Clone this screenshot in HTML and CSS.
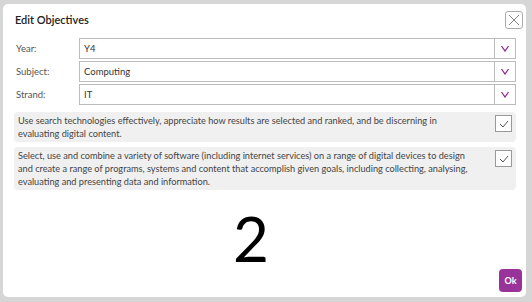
FILE: index.html
```html
<!DOCTYPE html>
<html lang="en">
<head>
    <meta charset="UTF-8">
    <meta name="viewport" content="width=device-width, initial-scale=1.0">
    <title>Edit Objectives</title>
    <link rel="stylesheet" href="styles.css">
</head>
<body>

    <div class="modal">
        <div class="modal-head">
            <h1>Edit Objectives</h1>
            <button class="close" aria-label="Close">
                <svg width="12" height="12" viewBox="0 0 12 12"><path d="M1 1 L11 11 M11 1 L1 11" stroke="#888" stroke-width="1" fill="none"/></svg>
            </button>
        </div>

        <div class="fields">
            <div class="field">
                <label>Year:</label>
                <div class="select">
                    <span class="value">Y4</span>
                    <span class="arrow"><svg width="10" height="7" viewBox="0 0 10 7"><path d="M1.5 1 L5 6 L8.5 1" stroke="#92278f" stroke-width="1.3" fill="none"/></svg></span>
                </div>
            </div>
            <div class="field">
                <label>Subject:</label>
                <div class="select">
                    <span class="value">Computing</span>
                    <span class="arrow"><svg width="10" height="7" viewBox="0 0 10 7"><path d="M1.5 1 L5 6 L8.5 1" stroke="#92278f" stroke-width="1.3" fill="none"/></svg></span>
                </div>
            </div>
            <div class="field">
                <label>Strand:</label>
                <div class="select">
                    <span class="value">IT</span>
                    <span class="arrow"><svg width="10" height="7" viewBox="0 0 10 7"><path d="M1.5 1 L5 6 L8.5 1" stroke="#92278f" stroke-width="1.3" fill="none"/></svg></span>
                </div>
            </div>
        </div>

        <div class="objectives">
            <div class="objective">
                <p>Use search technologies effectively, appreciate how results are selected and ranked, and be discerning in evaluating digital content.</p>
                <span class="check"><svg width="10" height="8" viewBox="0 0 10 8"><path d="M1 4 L4 7 L9 1" stroke="#555" stroke-width="1" fill="none"/></svg></span>
            </div>
            <div class="objective">
                <p>Select, use and combine a variety of software (including internet services) on a range of digital devices to design and create a range of programs, systems and content that accomplish given goals, including collecting, analysing, evaluating and presenting data and information.</p>
                <span class="check"><svg width="10" height="8" viewBox="0 0 10 8"><path d="M1 4 L4 7 L9 1" stroke="#555" stroke-width="1" fill="none"/></svg></span>
            </div>
        </div>

        <div class="count">2</div>

        <div class="modal-foot">
            <button class="btn">Ok</button>
        </div>
    </div>

</body>
</html>
```

FILE: styles.css
```css
* {
    margin: 0;
    padding: 0;
    box-sizing: border-box;
}

/* Sfondo grigio dietro la finestra */
body {
    background-color: #d6d6d6;
    font-family: "Lato", "Open Sans", sans-serif;
    color: #333;
    padding: 4px 6px 5px 3px;
    height: 302px;
    overflow: hidden;
}

.modal {
    background: white;
    border-radius: 5px;
    height: 293px;
    padding: 0 10px 5px 11px;
    display: flex;
    flex-direction: column;
}

.modal-head {
    display: flex;
    justify-content: space-between;
    align-items: center;
    height: 30px;
    padding-left: 1px;
}

h1 {
    font-size: 11px;
    font-weight: 600;
    color: #222;
    padding-top: 1px;
}

.close {
    width: 18px;
    height: 18px;
    border: 1px solid #aaa;
    border-radius: 3px;
    background: white;
    display: flex;
    align-items: center;
    justify-content: center;
    margin-right: -7px;
    margin-top: 2px;
}

.fields {
    display: flex;
    flex-direction: column;
    gap: 2px;
    margin-top: 4px;
    padding-left: 2px;
}

.field {
    display: flex;
    align-items: center;
}

.field label {
    width: 63px;
    font-size: 9.5px;
    color: #555;
}

.select {
    flex: 1;
    height: 21px;
    border: 1px solid #bbb;
    display: flex;
    align-items: center;
    font-size: 9.5px;
    color: #333;
}

.select .value {
    flex: 1;
    padding-left: 4px;
}

.select .arrow {
    width: 21px;
    height: 100%;
    border-left: 1px solid #bbb;
    display: flex;
    align-items: center;
    justify-content: center;
}

.objectives {
    display: flex;
    flex-direction: column;
    gap: 5px;
    margin-top: 7px;
}

.objective {
    background: #f0f0f0;
    border-radius: 4px;
    display: flex;
    align-items: flex-start;
    padding: 2px 4px 2px 4px;
}

.objective p {
    flex: 1;
    font-size: 9.2px;
    line-height: 13px;
    color: #444;
    padding-right: 20px;
}

.check {
    width: 17px;
    height: 17px;
    border: 1px solid #999;
    background: white;
    display: flex;
    align-items: center;
    justify-content: center;
    margin-top: 1px;
}

.count {
    font-size: 62px;
    color: black;
    text-align: center;
    margin-top: 17px;
    margin-right: 28px;
    line-height: 1;
}

.modal-foot {
    margin-top: auto;
    display: flex;
    justify-content: flex-end;
    margin-right: -6px;
}

.btn {
    width: 23px;
    height: 23px;
    font-family: inherit;
    font-size: 9px;
    font-weight: bold;
    color: white;
    background: #993399;
    border: none;
    border-radius: 4px;
}
```
